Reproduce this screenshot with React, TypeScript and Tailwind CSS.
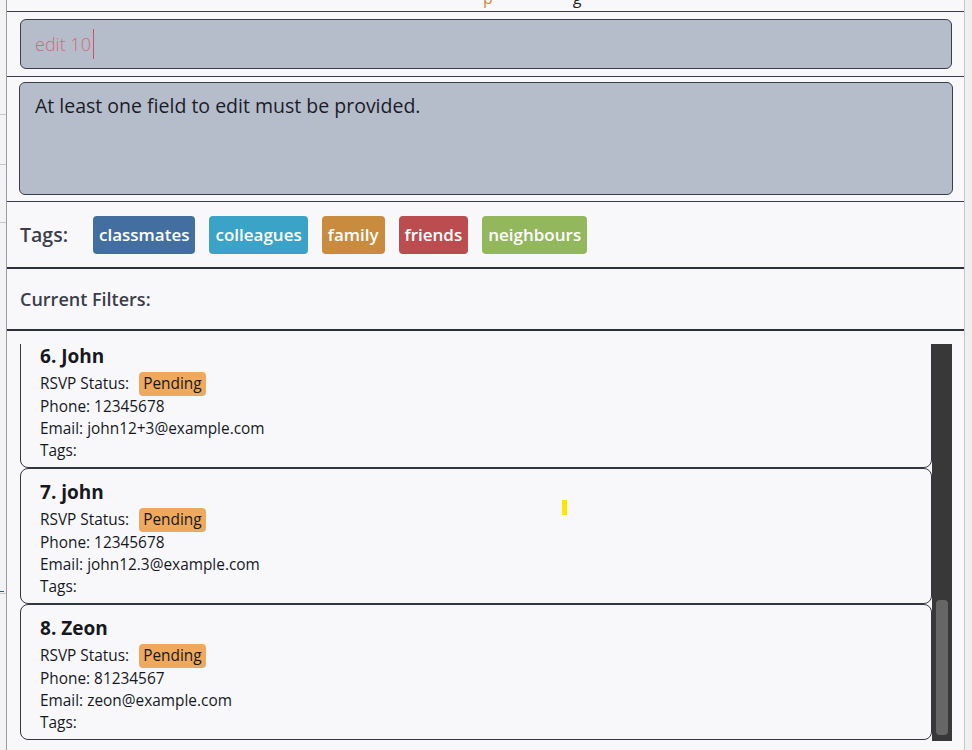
import React from "react";

const font = { fontFamily: '"Open Sans", "Noto Sans", sans-serif' };

const tags = [
    { name: "classmates", color: "bg-[#426fa0]" },
    { name: "colleagues", color: "bg-[#3ba3c8]" },
    { name: "family", color: "bg-[#c98b3d]" },
    { name: "friends", color: "bg-[#bb4d51]" },
    { name: "neighbours", color: "bg-[#93b75c]" },
];

const persons = [
    { idx: 6, name: "John", phone: "12345678", email: "john12+3@example.com" },
    { idx: 7, name: "john", phone: "12345678", email: "john12.3@example.com" },
    { idx: 8, name: "Zeon", phone: "81234567", email: "zeon@example.com" },
];

function PersonCard({ p }: { p: typeof persons[number] }) {
    return (
        <div className="h-[136px] shrink-0 rounded-[8px] border-[1.5px] border-[#33353f] pl-[19px] pt-[11px] text-[15.4px] text-[#17181d]">
            <div className="h-[25px] text-[19px] font-bold leading-[25px]">{p.idx}. {p.name}</div>
            <div className="mt-[3px] flex h-[24px] items-center">
                <span>RSVP Status:</span>
                <span className="ml-[10px] rounded-[4px] bg-[#eea95e] px-[4px] text-[15.4px] leading-[24px]">Pending</span>
            </div>
            <div className="h-[22px] leading-[22px]">Phone: {p.phone}</div>
            <div className="h-[22px] leading-[22px]">Email: {p.email}</div>
            <div className="h-[22px] leading-[22px]">Tags:</div>
        </div>
    );
}

export default function App() {
    return (
        <div className="flex h-[750px] w-[972px] overflow-hidden bg-[#f0f0f0]" style={font}>
            {/* window behind, peeking out on the left */}
            <div className="flex w-[6px] shrink-0 flex-col bg-[#f3f3f3] text-[18px] text-[#222]">
                <div className="h-[115px] border-b border-[#c8c8c8]" />
                <div className="h-[50px] border-b border-[#c8c8c8]" />
                <div className="h-[58px] border-b border-[#c8c8c8]" />
                <div className="h-[140px] overflow-hidden leading-[28px]"><div className="-ml-[4px] pt-[138px]">t</div></div>
                <div className="h-[230px] overflow-hidden">
                    <div className="mt-[228px] h-[1px] w-[4px] bg-[#2a4bd0]" />
                </div>
                <div className="flex-1 border-t border-[#c8c8c8]" />
            </div>

            <div className="relative flex w-[958px] shrink-0 flex-col border-l border-[#9a9aa2] bg-[#f8f8fb]">
                {/* clipped line of the window above */}
                <div className="relative h-[12px] overflow-hidden border-b border-[#3a3d4a]">
                    <div className="-mt-[14px] pl-[476px] text-[16px] text-[#222]">
                        <span className="text-[#d08a3a]">p</span>
                        <span className="ml-[80px]">g</span>
                    </div>
                </div>

                {/* command box */}
                <div className="border-b border-[#3a3d4a] pb-[7px] pl-[13px] pr-[12px] pt-[7px]">
                    <div className="flex h-[50px] items-center rounded-[6px] border-[1.5px] border-[#3a3d4a] bg-[#b6bdca] pl-[14px]">
                        <span className="text-[18px] font-light text-[#cd6c7f]">edit 10</span>
                        <span className="ml-[2px] h-[30px] w-[1.5px] bg-[#c4566c]" />
                    </div>
                </div>

                {/* result display */}
                <div className="border-b border-[#3a3d4a] pb-[6px] pl-[12px] pr-[11px] pt-[5px]">
                    <div className="h-[113px] rounded-[6px] border-[1.5px] border-[#3a3d4a] bg-[#b6bdca] pl-[15px] pt-[9px] text-[19.5px] leading-[28px] text-[#1a1c28]">
                        At least one field to edit must be provided.
                    </div>
                </div>

                {/* tags */}
                <div className="flex h-[67px] items-center gap-[14px] border-b-2 border-[#2c2e38] pl-[13px]">
                    <span className="mr-[6px] w-[53px] text-[19.5px] font-semibold text-[#3b3d4a]">Tags:</span>
                    {tags.map(t => (
                        <span key={t.name} className={`${t.color} flex h-[38px] items-center rounded-[4px] px-[6px] text-[17px] font-semibold text-white`}>
                            {t.name}
                        </span>
                    ))}
                </div>

                {/* filters */}
                <div className="flex h-[62px] items-center border-b-2 border-[#2c2e38] pl-[13px]">
                    <span className="text-[18px] font-semibold text-[#3b3d4a]">Current Filters:</span>
                </div>

                {/* person list */}
                <div className="flex min-h-0 flex-1 pb-[9px] pl-[13px] pr-[12px] pt-[13px]">
                    <div className="flex min-h-0 flex-1 flex-col overflow-hidden">
                        <div className="-mt-[12px] flex flex-col">
                            {persons.map(p => <PersonCard key={p.idx} p={p} />)}
                        </div>
                    </div>
                    <div className="flex w-[20px] shrink-0 flex-col bg-[#383838] px-[4px] pb-[6px]">
                        <div className="flex-1" />
                        <div className="h-[135px] rounded-[4px] bg-[#666666]" />
                    </div>
                </div>

                <div className="absolute left-[555px] top-[500px] h-[15px] w-[5px] bg-[#ffe600]" />
            </div>

            <div className="flex-1 border-l border-[#c8c8c8] bg-[#efefef]" />
        </div>
    );
}
